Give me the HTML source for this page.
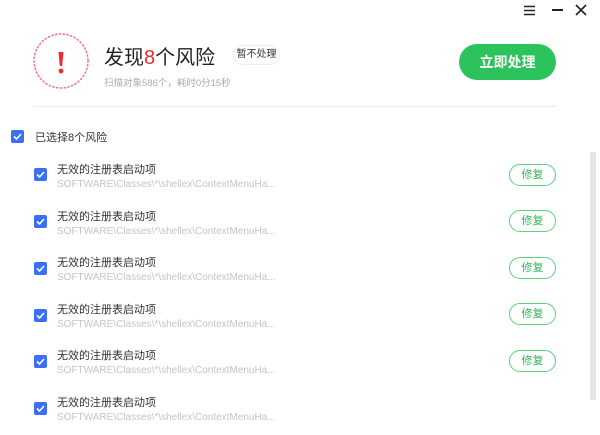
<!DOCTYPE html>
<html><head><meta charset="utf-8"><style>
*{margin:0;padding:0;box-sizing:border-box}
body{width:600px;height:435px;overflow:hidden;background:#fff;font-family:"Liberation Sans","Noto Sans CJK SC",sans-serif;position:relative;color:#222}
.a{position:absolute}
.cb{position:absolute;width:13px;height:13px;background:#3b6ff5;border-radius:2px}
.cb svg{position:absolute;left:0;top:0}
.t{font-size:11px;color:#333;white-space:nowrap}
.p{font-size:10px;color:#c4c4c4;white-space:nowrap;letter-spacing:0}
.fix{position:absolute;left:509px;width:47px;height:22px;border:1px solid #5ad17a;border-radius:11px;color:#2fb357;font-size:11px;text-align:center;line-height:20px}
</style></head><body>
<svg class="a" style="left:524px;top:5px" width="11" height="11"><path d="M0 1.5h11M0 5.5h11M0 9.5h11" stroke="#222" stroke-width="1.5"/></svg>
<div class="a" style="left:552px;top:9px;width:11px;height:2px;background:#222"></div>
<svg class="a" style="left:575px;top:4px" width="12" height="12"><path d="M1 1L11 11M11 1L1 11" stroke="#222" stroke-width="1.6"/></svg>

<svg class="a" style="left:32px;top:32px" width="58" height="58"><circle cx="29" cy="29" r="27" fill="none" stroke="#f27a80" stroke-width="1.6" stroke-dasharray="1.2 2.6" stroke-linecap="round"/><path d="M26.5 20h5l-1.3 14h-2.4z" fill="#ee2b33"/><circle cx="29" cy="39" r="2.4" fill="#ee2b33"/></svg>

<div class="a" style="left:104px;top:41px;font-size:20px;color:#222;white-space:nowrap">发现<span style="color:#ee2b33">8</span>个风险</div>
<div class="a" style="left:233px;top:45px;width:47px;height:20px;border-radius:10px;border:1px solid #eee;font-size:10px;line-height:18px;text-align:center;color:#333">暂不处理</div>
<div class="a" style="left:104px;top:75px;font-size:9.5px;color:#aaa;white-space:nowrap">扫描对象586个，耗时0分15秒</div>
<div class="a" style="left:459px;top:44px;width:97px;height:36px;border-radius:18px;background:#2dc35c;color:#fff;font-size:14px;font-weight:bold;text-align:center;line-height:36px">立即处理</div>
<div class="a" style="left:34px;top:106px;width:522px;height:1px;background:#ececec"></div>

<div class="cb" style="left:11px;top:130px"><svg width="13" height="13"><path d="M3 6.5l2.5 2.5 4.5-5" stroke="#fff" stroke-width="1.6" fill="none"/></svg></div>
<div class="a t" style="left:35px;top:129px">已选择8个风险</div>

<div class="a" style="left:590px;top:152px;width:6px;height:248px;background:#e6e6e6"></div>

<div class="cb" style="left:34px;top:168px"><svg width="13" height="13"><path d="M3 6.5l2.5 2.5 4.5-5" stroke="#fff" stroke-width="1.6" fill="none"/></svg></div>
<div class="a t" style="left:57px;top:161px">无效的注册表启动项</div>
<div class="a p" style="left:57px;top:179px">SOFTWARE\Classes\*\shellex\ContextMenuHa...</div>
<div class="fix" style="top:164px">修复</div>

<div class="cb" style="left:34px;top:215px"><svg width="13" height="13"><path d="M3 6.5l2.5 2.5 4.5-5" stroke="#fff" stroke-width="1.6" fill="none"/></svg></div>
<div class="a t" style="left:57px;top:208px">无效的注册表启动项</div>
<div class="a p" style="left:57px;top:226px">SOFTWARE\Classes\*\shellex\ContextMenuHa...</div>
<div class="fix" style="top:210px">修复</div>

<div class="cb" style="left:34px;top:262px"><svg width="13" height="13"><path d="M3 6.5l2.5 2.5 4.5-5" stroke="#fff" stroke-width="1.6" fill="none"/></svg></div>
<div class="a t" style="left:57px;top:254px">无效的注册表启动项</div>
<div class="a p" style="left:57px;top:272px">SOFTWARE\Classes\*\shellex\ContextMenuHa...</div>
<div class="fix" style="top:257px">修复</div>

<div class="cb" style="left:34px;top:309px"><svg width="13" height="13"><path d="M3 6.5l2.5 2.5 4.5-5" stroke="#fff" stroke-width="1.6" fill="none"/></svg></div>
<div class="a t" style="left:57px;top:301px">无效的注册表启动项</div>
<div class="a p" style="left:57px;top:319px">SOFTWARE\Classes\*\shellex\ContextMenuHa...</div>
<div class="fix" style="top:303px">修复</div>

<div class="cb" style="left:34px;top:355px"><svg width="13" height="13"><path d="M3 6.5l2.5 2.5 4.5-5" stroke="#fff" stroke-width="1.6" fill="none"/></svg></div>
<div class="a t" style="left:57px;top:347px">无效的注册表启动项</div>
<div class="a p" style="left:57px;top:365px">SOFTWARE\Classes\*\shellex\ContextMenuHa...</div>
<div class="fix" style="top:350px">修复</div>

<div class="cb" style="left:34px;top:402px"><svg width="13" height="13"><path d="M3 6.5l2.5 2.5 4.5-5" stroke="#fff" stroke-width="1.6" fill="none"/></svg></div>
<div class="a t" style="left:57px;top:394px">无效的注册表启动项</div>
<div class="a p" style="left:57px;top:412px">SOFTWARE\Classes\*\shellex\ContextMenuHa...</div>
</body></html>
